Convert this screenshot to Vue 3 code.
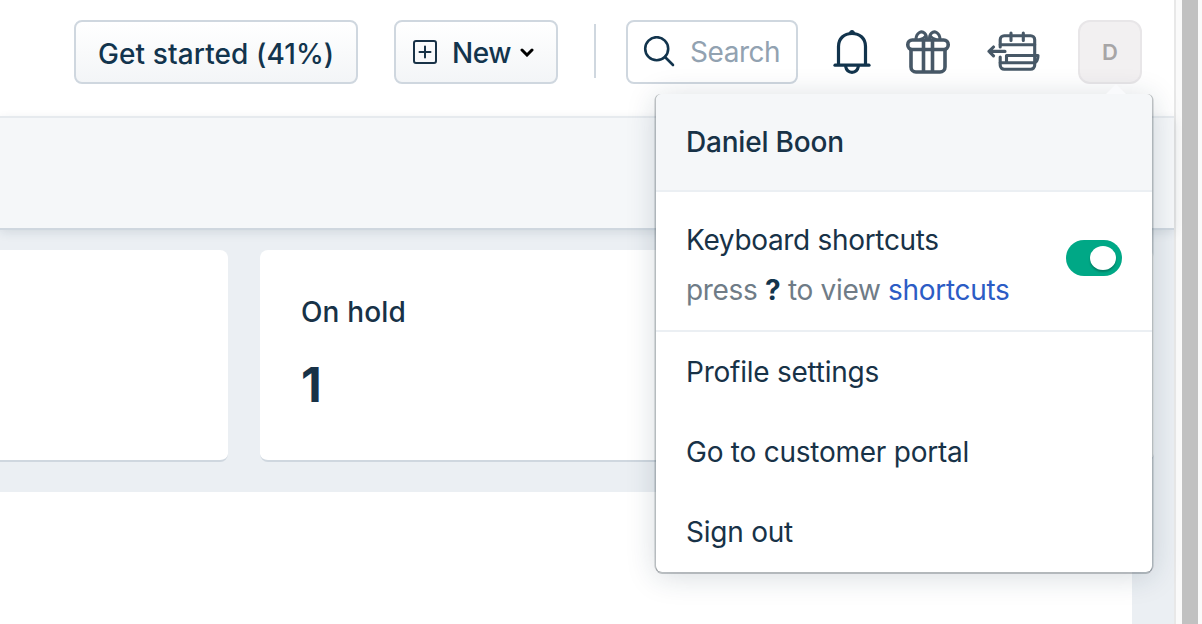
<script setup>
import { ref } from 'vue';

const progress = ref(41);
const shortcutsEnabled = ref(true);

const menuItems = [
  { label: 'Profile settings', name: 'item-profile' },
  { label: 'Go to customer portal', name: 'item-portal' },
  { label: 'Sign out', name: 'item-signout' },
];

const toggleShortcuts = () => {
  shortcutsEnabled.value = !shortcutsEnabled.value;
};
</script>

<template>
  <div class="screen">
    <div class="page">
      <header class="topbar">
        <button class="btn get-started">Get started ({{ progress }}%)</button>
        <button class="btn new-btn">
          <svg width="24" height="24" viewBox="0 0 24 24" fill="none" stroke="#183247" stroke-width="2">
            <rect x="1" y="1" width="22" height="22" rx="2" />
            <path d="M12 6.5v11M6.5 12h11" stroke-linecap="round" />
          </svg>
          <span class="new-text">New</span>
          <svg width="14" height="9" viewBox="0 0 14 9" fill="none" stroke="#000" stroke-width="3">
            <path d="M2 2l5 5 5-5" stroke-linecap="round" />
          </svg>
        </button>
        <div class="divider"></div>
        <div class="search">
          <svg width="32" height="32" viewBox="0 0 32 32" fill="none" stroke="#12344d" stroke-width="2.6">
            <circle cx="13.7" cy="12.7" r="11.5" />
            <path d="M22 21l8 8" stroke-linecap="round" />
          </svg>
          <span class="search-text">Search</span>
        </div>
        <svg class="bell" width="38" height="46" viewBox="0 0 38 46" fill="none" stroke="#12344d" stroke-width="3.2">
          <path d="M5.5 36V17.5C5.5 9.5 11 4.500 19 4.500S32.5 9.5 32.5 17.5V36" />
          <path d="M2 36.2h34" stroke-linecap="round" />
          <path d="M12.5 37c.8 4 3 6.300 6.500 6.300s5.700-2.300 6.500-6.300" />
          <path d="M16.5 4a2.500 2.500 0 0 1 5 0z" fill="#12344d" stroke-width="1" />
        </svg>
        <svg class="gift" width="44" height="46" viewBox="0 0 44 46" fill="none" stroke="#475867" stroke-width="3.6">
          <rect x="1.8" y="11" width="40.4" height="9.5" rx="4.5" />
          <path d="M5 20.5V38a5 5 0 0 0 5 5h24a5 5 0 0 0 5-5V20.5M17.5 11v32M26.5 11v32" />
          <path d="M20.5 10.5C21 5 17 1.5 13.5 3.5C11 5 10 8 10 10.5M23.5 10.5C23 5 27 1.5 30.5 3.5C33 5 34 8 34 10.5" stroke-width="3" />
          <path d="M13.5 10.5c3-.5 4.500-1.500 6.500-4M30.5 10.5c-3-.5-4.500-1.500-6.500-4" stroke-width="2.4" />
        </svg>
        <svg class="calendar" width="54" height="42" viewBox="0 0 54 42" fill="none" stroke="#475867" stroke-width="3.1" stroke-linecap="round" stroke-linejoin="round">
          <path d="M13.2 16V8.700a4 4 0 0 1 4-4h26.500a4 4 0 0 1 4 4V34.300a4 4 0 0 1-4 4H17.200a4 4 0 0 1-4-4V26" />
          <path d="M13.2 13.800h34.500M24 2v7.500M36.300 2v7.500" />
          <path d="M18 20.400H2.200M6.500 16L2 20.400l4.500 4.400" />
          <path d="M13.2 31.800h34.500c2.500-1.500 3.300-4 3.300-7.300H19.500v7.300" />
        </svg>
        <div class="avatar">D</div>

        <div class="dropdown">
          <div class="profile">Daniel Boon</div>
          <div class="shortcuts">
            <div>
              <div class="line kb">Keyboard shortcuts</div>
              <div class="line hint">press <b>?</b> to view <a>shortcuts</a></div>
            </div>
            <div class="toggle" :class="{ on: shortcutsEnabled }" @click="toggleShortcuts">
              <div class="knob"></div>
            </div>
          </div>
          <div class="menu">
            <div v-for="item in menuItems" :key="item.name" class="menu-item">
              <span :class="item.name">{{ item.label }}</span>
            </div>
          </div>
        </div>
      </header>

      <div class="subbar"></div>

      <main class="content">
        <div class="cards">
          <div class="card first"></div>
          <div class="card hold">
            <div class="card-title">On hold</div>
            <div class="card-value">1</div>
          </div>
        </div>
        <div class="panel"></div>
      </main>
    </div>
    <div class="scrollbar"><div class="thumb"></div></div>
  </div>
</template>

<style>
body {
  overflow: hidden;
}
</style>

<style scoped>
.screen {
  display: flex;
  width: 1202px;
  height: 624px;
  overflow: hidden;
  background: #fff;
  color: #183247;
  font-family: 'Inter', 'Liberation Sans', sans-serif;
  font-size: 28px;
}

.screen * {
  box-sizing: border-box;
}

.page {
  width: 1174px;
  display: flex;
  flex-direction: column;
}

.topbar {
  position: relative;
  z-index: 2;
  height: 118px;
  flex-shrink: 0;
  display: flex;
  align-items: flex-start;
  padding: 20px 32px 0 74px;
  border-bottom: 2px solid #e6eaee;
}

.btn {
  display: flex;
  align-items: center;
  height: 64px;
  padding: 0;
  border: 2px solid #cfd7df;
  border-radius: 8px;
  background: linear-gradient(#fff, #f3f5f7);
  color: #12344d;
  font-family: inherit;
  font-size: 28px;
  font-weight: 500;
  white-space: nowrap;
}

.get-started {
  width: 284px;
  padding: 4px 0 0 22px;
  letter-spacing: 0.1px;
}

.new-btn {
  width: 164px;
  margin-left: 36px;
  padding-left: 17px;
}

.new-text {
  width: 68px;
  margin-left: 15px;
  padding-top: 1px;
  letter-spacing: -0.5px;
  text-align: left;
}

.divider {
  width: 2px;
  height: 54px;
  margin: 4px 30px 0 36px;
  background: #cfd7df;
}

.search {
  display: flex;
  align-items: center;
  width: 172px;
  height: 64px;
  padding-left: 15px;
  border: 2px solid #cfd7df;
  border-radius: 8px;
  color: #92a2b1;
}

.search-text {
  margin-left: 15px;
  letter-spacing: -0.45px;
}

.bell {
  margin: 9px 0 0 35px;
}

.gift {
  margin: 9px 0 0 35px;
}

.calendar {
  margin: 11px 0 0 37px;
}

.avatar {
  width: 64px;
  height: 64px;
  margin-left: auto;
  border: 2px solid #e8e6e8;
  border-radius: 12px;
  background: #f2f0f1;
  color: #a7a5a6;
  font-size: 22px;
  font-weight: 600;
  line-height: 60px;
  text-align: center;
}

.dropdown {
  position: absolute;
  top: 94px;
  left: 656px;
  width: 496px;
  height: 478px;
  border-radius: 6px;
  background: #fff;
  box-shadow:
    -1.500px 0 0 rgba(40, 50, 60, 0.27),
    1.500px 0 0 rgba(40, 50, 60, 0.27),
    0 2px 0 rgba(40, 50, 60, 0.27),
    0 4px 30px rgba(24, 50, 71, 0.18);
}

.dropdown::before {
  content: '';
  position: absolute;
  top: -10px;
  left: 450px;
  border: 10px solid transparent;
  border-top: 0;
  border-bottom-color: #f9fafc;
}

.profile {
  height: 98px;
  padding-left: 30px;
  border-bottom: 2px solid #ebeff3;
  border-radius: 6px 6px 0 0;
  background: #f5f7f9;
  font-weight: 500;
  letter-spacing: -0.2px;
  line-height: 96px;
}

.shortcuts {
  display: flex;
  justify-content: space-between;
  height: 140px;
  padding: 23px 30px 0;
  border-bottom: 2px solid #ebeff3;
}

.line {
  height: 50px;
  line-height: 50px;
  white-space: nowrap;
}

.kb {
  letter-spacing: -0.32px;
}

.hint {
  color: #6f7c87;
  letter-spacing: -0.32px;
}

.hint b {
  color: #12344d;
}

.hint a {
  color: #2c5cc5;
}

.toggle {
  width: 56px;
  height: 36px;
  margin-top: 25px;
  padding: 6px;
  border-radius: 18px;
  background: #cfd7df;
}

.toggle.on {
  background: #00a886;
}

.knob {
  width: 26px;
  height: 24px;
  border-radius: 50%;
  background: #fff;
  box-shadow: 0 2px 2px rgba(0, 0, 0, 0.25);
}

.on .knob {
  margin-left: auto;
}

.menu-item {
  height: 80px;
  padding-left: 30px;
  letter-spacing: -0.24px;
  line-height: 80px;
}

.subbar {
  position: relative;
  z-index: 1;
  height: 112px;
  flex-shrink: 0;
  border-bottom: 2px solid #cfd7df;
  background: #f5f7f9;
  box-shadow: 0 2px 10px rgba(24, 50, 71, 0.12);
}

.content {
  flex: 1;
  padding-top: 20px;
  background: #ebeff3;
}

.cards {
  display: flex;
  gap: 32px;
}

.card {
  height: 212px;
  border-bottom: 2px solid #cfd7df;
  border-radius: 8px;
  background: #fff;
}

.first {
  width: 228px;
  border-top-left-radius: 0;
  border-bottom-left-radius: 0;
}

.hold {
  width: 894px;
  padding: 40px 0 0 41px;
}

.card-title {
  font-weight: 500;
  letter-spacing: 0.15px;
  line-height: 44px;
}

.card-value {
  margin-top: 20px;
  font-size: 48px;
  font-weight: 700;
  line-height: 62px;
}

.panel {
  width: 1132px;
  height: 132px;
  margin-top: 30px;
  background: #fff;
}

.scrollbar {
  width: 28px;
  padding: 0 4px 0 6px;
  border-left: 2px solid #e8e8e8;
  background: #fafafa;
}

.thumb {
  height: 100%;
  background: #c1c1c1;
}
</style>
